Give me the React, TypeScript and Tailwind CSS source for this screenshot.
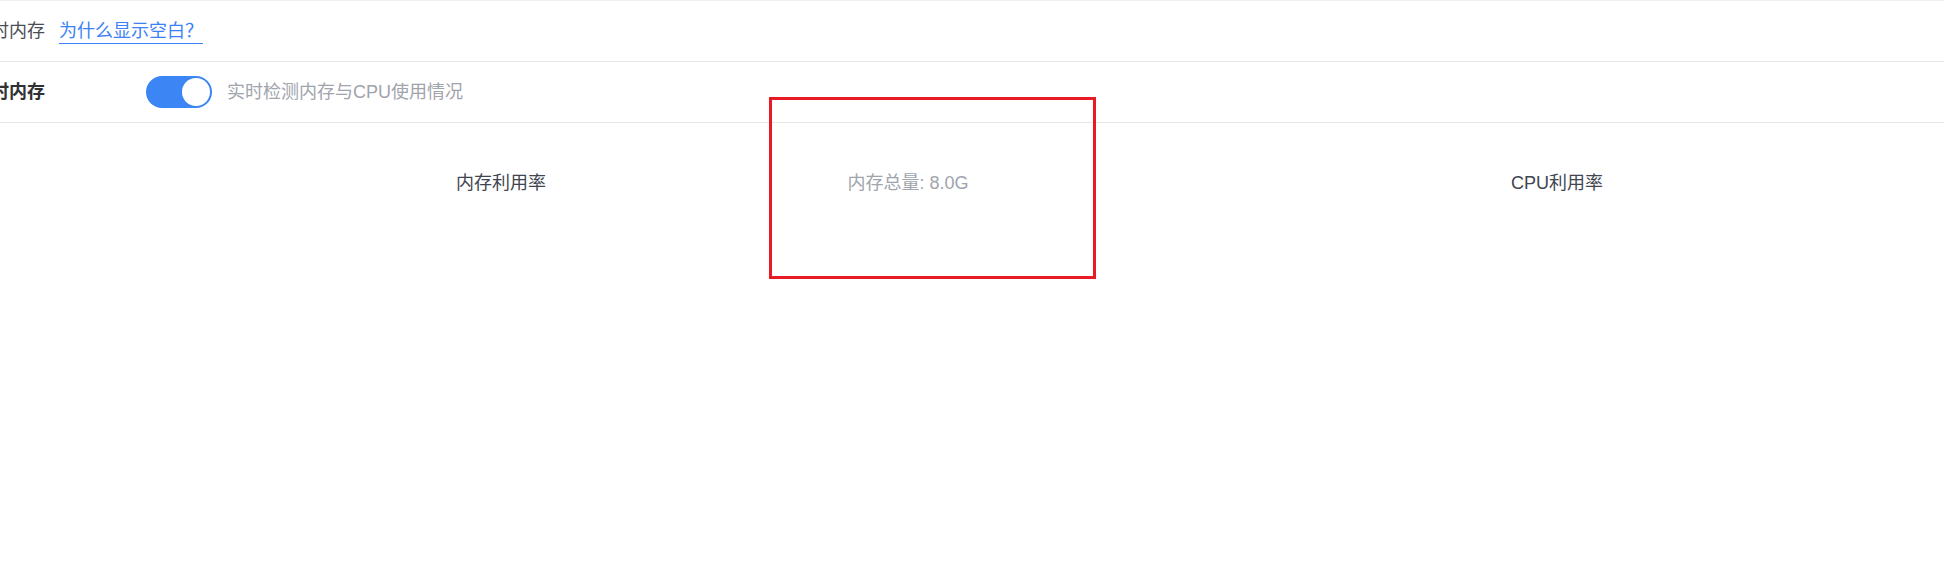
export default function App() {
  return (
    <div
      className="relative min-h-[561px] overflow-hidden bg-white"
      style={{ fontFamily: '"Liberation Sans", "Noto Sans CJK SC", sans-serif' }}
    >
      <div className="border-t border-[#f0f0f0]">
        {/* Row 1 */}
        <div className="flex h-[61px] items-center border-b border-[#e8e8e8] text-[18px]">
          <span className="-ml-[27px] text-[#4a4d55]">实时内存</span>
          <a className="ml-[14px] inline-block border-b border-[#3b82f6] leading-[24px] text-[#3b82f6]">
            为什么显示空白？
          </a>
        </div>

        {/* Row 2 */}
        <div className="flex h-[61px] items-center border-b border-[#e8e8e8] text-[18px]">
          <span className="-ml-[27px] w-[173px] font-bold text-[#303133]">实时内存</span>
          <button className="flex h-[32px] w-[66px] items-center justify-end rounded-full bg-[#3b85f4] p-[2px]">
            <span className="h-[28px] w-[28px] rounded-full bg-white" />
          </button>
          <span className="ml-[15px] text-[#a0a4ac]">实时检测内存与CPU使用情况</span>
        </div>

        {/* Charts */}
        <div className="flex items-center pt-[47px]">
          <div className="ml-[401px] w-[200px] text-center text-[18px] leading-[27px] text-[#40454f]">
            内存利用率
          </div>
          <div className="ml-[207px] w-[200px] text-center text-[18px] leading-[27px] text-[#a0a4ad]">
            内存总量: 8.0G
          </div>
          <div className="ml-[449px] w-[200px] text-center text-[18px] leading-[27px] text-[#40454f]">
            CPU利用率
          </div>
        </div>
      </div>

      {/* annotation box */}
      <div className="absolute left-[769px] top-[97px] h-[182px] w-[327px] border-[3px] border-[#e81a23]" />
    </div>
  );
}
